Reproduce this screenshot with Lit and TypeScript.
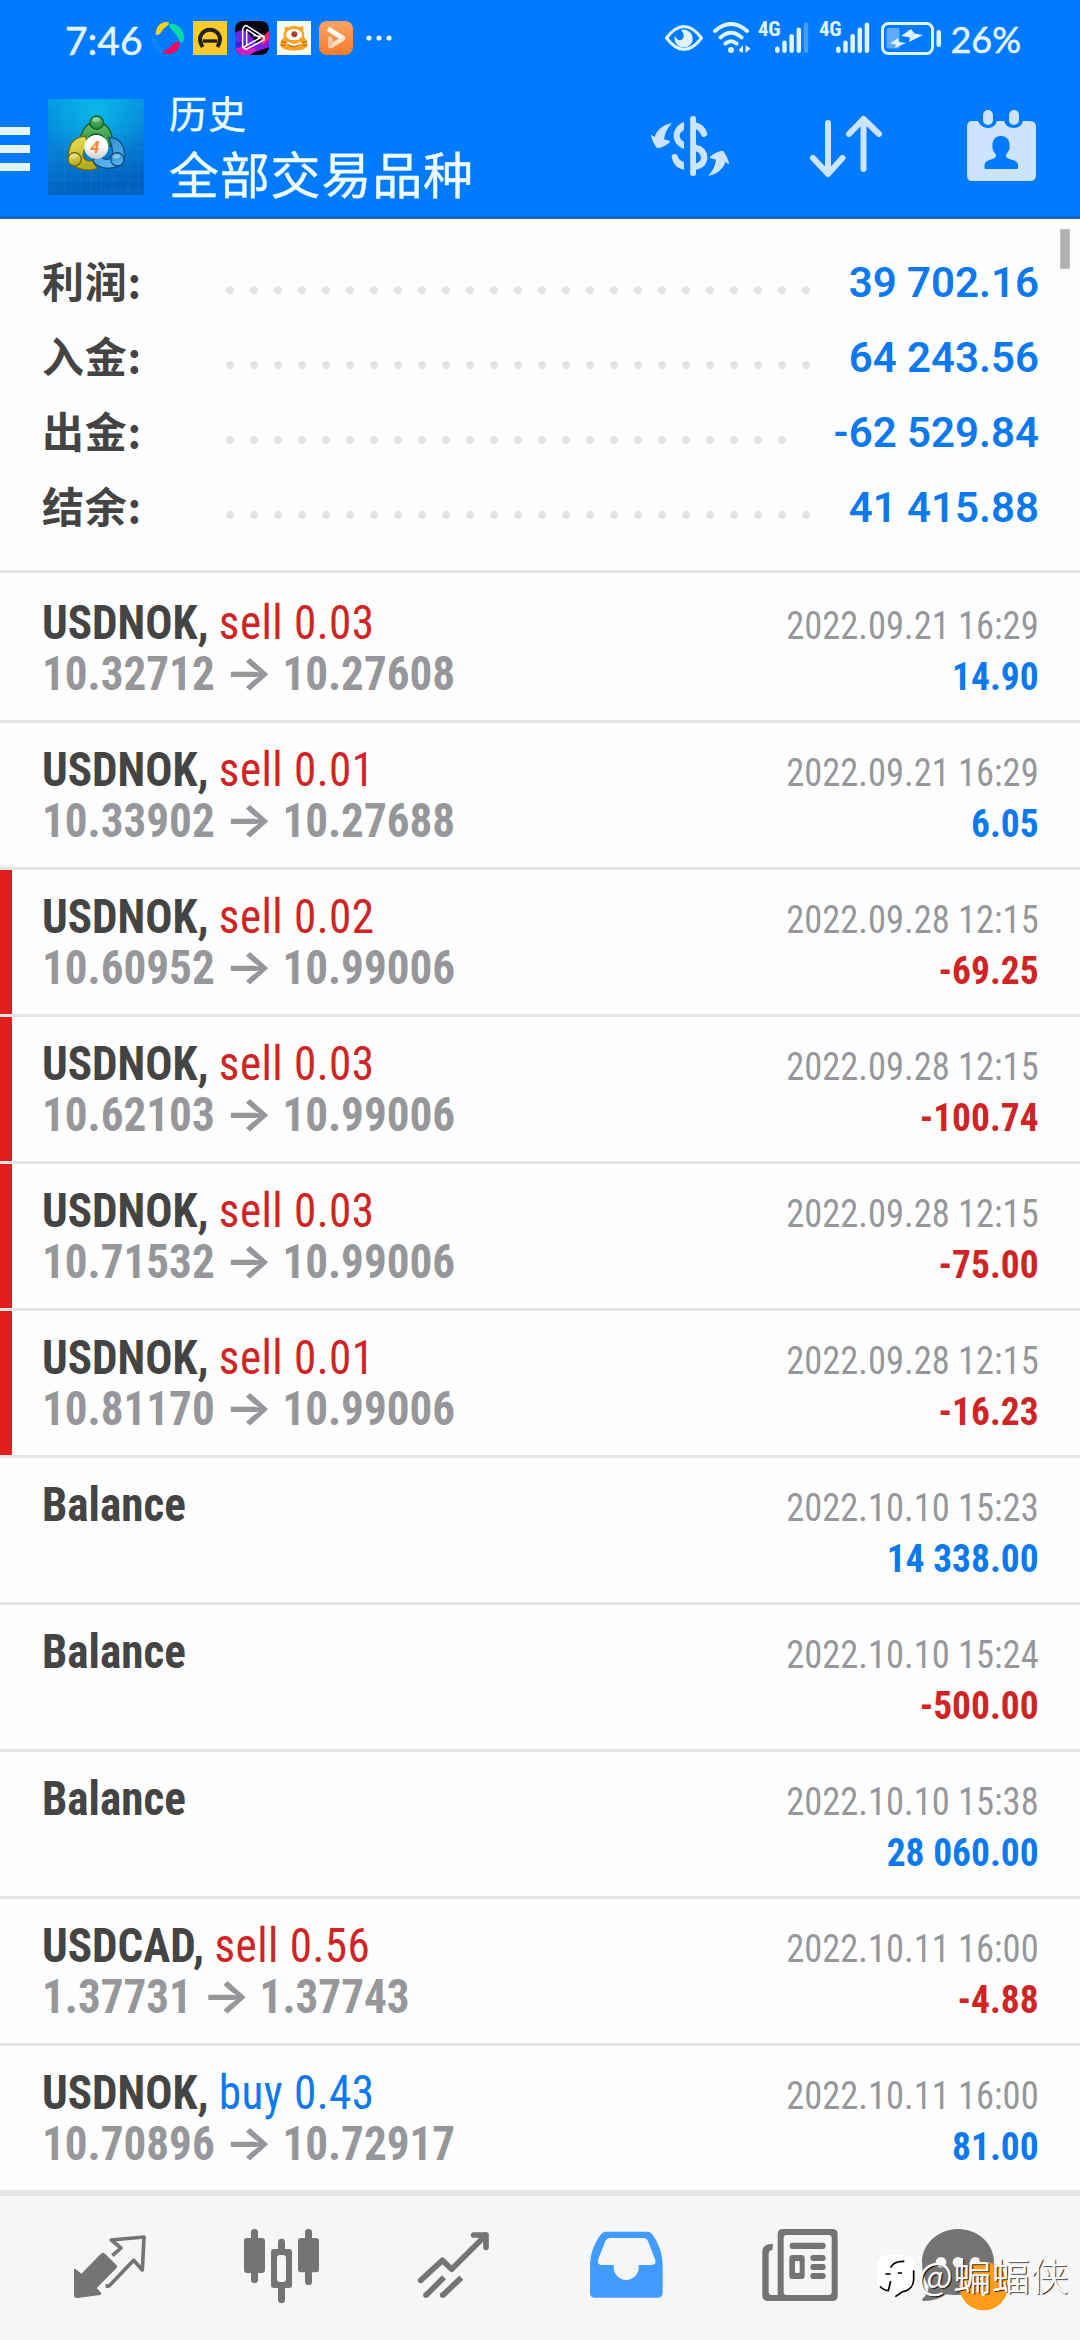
import { LitElement, html, css, svg, nothing } from "lit";
import { customElement, property } from "lit/decorators.js";
import { classMap } from "lit/directives/class-map.js";

interface Deal {
  symbol: string;
  side?: "sell" | "buy";
  volume?: string;
  open?: string;
  close?: string;
  time: string;
  profit: string;
  stopped?: boolean;
}

const SUMMARY: [string, string][] = [
  ["利润:", "39 702.16"],
  ["入金:", "64 243.56"],
  ["出金:", "-62 529.84"],
  ["结余:", "41 415.88"],
];

const DEALS: Deal[] = [
  { symbol: "USDNOK", side: "sell", volume: "0.03", open: "10.32712", close: "10.27608", time: "2022.09.21 16:29", profit: "14.90" },
  { symbol: "USDNOK", side: "sell", volume: "0.01", open: "10.33902", close: "10.27688", time: "2022.09.21 16:29", profit: "6.05" },
  { symbol: "USDNOK", side: "sell", volume: "0.02", open: "10.60952", close: "10.99006", time: "2022.09.28 12:15", profit: "-69.25", stopped: true },
  { symbol: "USDNOK", side: "sell", volume: "0.03", open: "10.62103", close: "10.99006", time: "2022.09.28 12:15", profit: "-100.74", stopped: true },
  { symbol: "USDNOK", side: "sell", volume: "0.03", open: "10.71532", close: "10.99006", time: "2022.09.28 12:15", profit: "-75.00", stopped: true },
  { symbol: "USDNOK", side: "sell", volume: "0.01", open: "10.81170", close: "10.99006", time: "2022.09.28 12:15", profit: "-16.23", stopped: true },
  { symbol: "Balance", time: "2022.10.10 15:23", profit: "14 338.00" },
  { symbol: "Balance", time: "2022.10.10 15:24", profit: "-500.00" },
  { symbol: "Balance", time: "2022.10.10 15:38", profit: "28 060.00" },
  { symbol: "USDCAD", side: "sell", volume: "0.56", open: "1.37731", close: "1.37743", time: "2022.10.11 16:00", profit: "-4.88" },
  { symbol: "USDNOK", side: "buy", volume: "0.43", open: "10.70896", close: "10.72917", time: "2022.10.11 16:00", profit: "81.00" },
];

@customElement("status-bar")
class StatusBar extends LitElement {
  static styles = css`
    :host {
      display: flex;
      align-items: center;
      box-sizing: border-box;
      height: 76px;
      padding: 0 59px 0 65px;
      color: #e4f4ff;
      font-family: Lato, "Liberation Sans", sans-serif;
    }
    svg { display: block; flex: none; }
    .time { font-size: 39px; line-height: 76px; padding-top: 3px; width: 86px; -webkit-text-stroke: 0.500px #e4f4ff; }
    .apps { display: flex; gap: 8px; }
    .more { margin-left: 13px; }
    .spacer { flex: 1; }
    .net { display: flex; align-items: flex-start; height: 34px; }
    .gen { font: 700 21px/16px "Roboto Condensed", Roboto, sans-serif; width: 17.5px; letter-spacing: -0.3px; }
    .wifi { margin: 0 7px 0 10px; }
    .second { margin-left: 9.5px; }
    .battery { margin-left: 11px; }
    .pct { font-size: 36px; line-height: 76px; padding-top: 2px; margin-left: 9px; white-space: nowrap; -webkit-text-stroke: 0.500px #e4f4ff; }
  `;

  bars(last: boolean) {
    const tops = [24.5, 18.5, 12, 5.5, 0.5];
    return svg`${tops.map(
      (t, i) => svg`<rect x=${0.1 + i * 7.15} y=${t} width="4.5" height=${31 - t} rx="2.2"
        fill="#e0f4ff" opacity=${i === 4 && !last ? 0.3 : 1}></rect>`,
    )}`;
  }

  render() {
    return html`
      <span class="time">7:46</span>
      <div class="apps">
        <svg width="34" height="34" viewBox="33 33 102 102">
          <path d="M47 72C48 48 66 32 84 37C90 40 86 46 78 50C66 56 62 76 52 74Q47 76 47 72Z" fill="#ffd21f"/>
          <path d="M88 42C116 38 136 66 131 88C129 102 122 99 116 88C110 70 94 60 88 50Z" fill="#08dca0"/>
          <path d="M119 100C120 120 100 136 78 131C66 129 66 124 76 121C90 117 98 96 114 96Q119 95 119 100Z" fill="#f8075c"/>
          <path d="M36 76C32 104 46 124 66 128C70 120 60 112 56 104C50 92 44 84 36 76Z" fill="#0a86ff"/>
        </svg>
        <svg width="34" height="34" viewBox="159 33 102 102">
          <rect x="159" y="33" width="102" height="102" fill="#ffca30"/>
          <path d="M188 112C168 82 190 60 210 60C230 60 252 82 232 112" fill="none" stroke="#222" stroke-width="12" transform="translate(0 -1)"/>
          <rect x="188" y="88" width="44" height="10" fill="#222"/>
        </svg>
        <svg width="34" height="34" viewBox="285 33 102 102">
          <defs><clipPath id="c"><rect x="285" y="33" width="102" height="102" rx="24"/></clipPath></defs>
          <g clip-path="url(#c)">
            <rect x="285" y="33" width="102" height="102" fill="#0a0512"/>
            <path d="M285 68Q305 54 322 66L350 100L387 78V112L350 124L320 135H285Z" fill="#7a22e6"/>
            <path d="M285 98L318 92L340 112L300 124Z" fill="#3e1be0"/>
            <path d="M285 116L322 104L352 120L330 135H300Z" fill="#d01fc0"/>
            <path d="M362 86L387 62V86L368 108Z" fill="#f02a62"/>
            <path d="M312 50L318 46L372 80V90L318 118L308 112V58ZM320 58V106M320 58L360 84L320 106L310 112M372 80L340 76" fill="none" stroke="#fff" stroke-width="4.5"/>
          </g>
        </svg>
        <svg width="34" height="34" viewBox="411 33 102 102">
          <rect x="411" y="33" width="102" height="102" fill="#fff"/>
          <path d="M434 50L446 52Q462 42 478 52L490 48V64Q496 74 492 82Q504 92 502 106Q498 122 462 122Q426 122 421 106Q420 92 432 82Q428 74 434 62Z" fill="#f8a422"/>
          <ellipse cx="462" cy="74" rx="24" ry="17" fill="#fff"/>
          <circle cx="463" cy="73" r="9" fill="#a8402c"/>
          <path d="M424 94L438 98M422 106L436 106M500 94L486 98M502 106L488 106" stroke="#c96a0c" stroke-width="4"/>
          <path d="M442 98Q462 112 484 98" fill="none" stroke="#fff" stroke-width="6"/>
          <path d="M444 104Q462 114 480 104" fill="none" stroke="#b4681a" stroke-width="3"/>
        </svg>
        <svg width="34" height="34" viewBox="537 33 102 102">
          <defs><linearGradient id="o" x2="0" y2="1"><stop stop-color="#ffa562"/><stop offset="1" stop-color="#f4792c"/></linearGradient></defs>
          <rect x="537" y="33" width="102" height="102" rx="24" fill="url(#o)"/>
          <path d="M570 60L608 84" stroke="#fff" stroke-width="15" stroke-linecap="round"/>
          <path d="M608 86L572 108" stroke="#ffe2cc" stroke-width="14" stroke-linecap="round"/>
          <path d="M571 86V106" stroke="#ffc49a" stroke-width="14" stroke-linecap="round"/>
        </svg>
      </div>
      <svg class="more" width="26" height="6" viewBox="0 0 26 6" fill="#e0f4ff">
        <circle cx="3" cy="3" r="2.6"/><circle cx="13" cy="3" r="2.6"/><circle cx="23" cy="3" r="2.6"/>
      </svg>
      <span class="spacer"></span>
      <svg width="38" height="26" viewBox="0 0 38 26">
        <path d="M1.5 13Q19-10 36.5 13Q19 36 1.5 13Z" fill="none" stroke="#e0f4ff" stroke-width="3"/>
        <path d="M16 5A9 9 0 1 1 10 11Q13 17 17 14.500Q21 11 16 5Z" fill="#e0f4ff"/>
      </svg>
      <svg class="wifi" width="38" height="32" viewBox="0 0 38 32" fill="none" stroke="#e0f4ff" stroke-width="4" stroke-linecap="round">
        <path d="M2 9Q18-5 34 9M7.500 15.500Q18 6 28.500 15.500M12.500 21.500Q18 17 23.500 21.500"/>
        <circle cx="18" cy="28" r="3" fill="#e0f4ff" stroke="none"/>
        <path d="M30 23V31L25.500 28.500ZM32.500 31V23L37.500 26.500Z" fill="#e0f4ff" stroke="none"/>
      </svg>
      <div class="net"><span class="gen">4G</span><svg width="34" height="33" viewBox="0 -1 34 33">${this.bars(false)}</svg></div>
      <div class="net second"><span class="gen">4G</span><svg width="34" height="33" viewBox="0 -1 34 33">${this.bars(true)}</svg></div>
      <svg class="battery" width="60" height="33" viewBox="0 0 60 33">
        <rect x="1.500" y="1.500" width="50" height="30" rx="6" fill="none" stroke="#e0f4ff" stroke-width="3"/>
        <rect x="5.500" y="6" width="13" height="20.500" rx="2" fill="#5fabff"/>
        <rect x="55.500" y="8" width="4.500" height="17" rx="2" fill="#e0f4ff"/>
        <path d="M30 7L20 14L29 15.500L28 20L42 13L33.500 11.500ZM17 16L9 21.500L15 22.500L14 26L25 21L18 20Z" fill="#e0f4ff"/>
      </svg>
      <span class="pct">26%</span>
    `;
  }
}

@customElement("title-bar")
class TitleBar extends LitElement {
  static styles = css`
    :host { display: flex; align-items: center; height: 140px; }
    svg { display: block; flex: none; }
    .menu { display: flex; flex-direction: column; gap: 10px; width: 30px; padding-top: 6px; }
    .menu i { height: 8px; background: #e4f6ff; }
    .logo { margin: 2px 25px 0 18px; }
    .four { font: italic 700 50px Roboto, sans-serif; fill: #f08a3c; }
    .titles {
      flex: 1;
      padding-bottom: 5px;
      color: #eefcff;
      font-family: "Noto Sans CJK SC", sans-serif;
      white-space: nowrap;
      -webkit-text-stroke: 0.400px #eefcff;
    }
    .t1 { font-size: 38px; line-height: 56px; letter-spacing: 1px; }
    .t2 { font-size: 50px; line-height: 64px; letter-spacing: 0.800px; }
    .actions { display: flex; align-items: center; padding: 0 44px 0 0; color: #cce4ff; }
    .sort { margin: 0 84px 0 80px; }
  `;

  render() {
    return html`
      <div class="menu"><i></i><i></i><i></i></div>
      <svg class="logo" width="96" height="96" viewBox="24 12 288 288">
        <defs>
          <linearGradient id="bg" x2="0.200" y2="1"><stop stop-color="#0598e4"/><stop offset="0.500" stop-color="#0782d6"/><stop offset="1" stop-color="#0060bc"/></linearGradient>
          <radialGradient id="glow" cx="0.500" cy="0.120" r="0.550"><stop stop-color="#08b8e8"/><stop offset="1" stop-color="#08b8e8" stop-opacity="0"/></radialGradient>
          <linearGradient id="g" x2="0" y2="1"><stop stop-color="#6cc070"/><stop offset="1" stop-color="#1f8a34"/></linearGradient>
          <linearGradient id="y" x2="0.300" y2="1"><stop stop-color="#eee25c"/><stop offset="1" stop-color="#b6ab20"/></linearGradient>
          <linearGradient id="b" x2="0.300" y2="1"><stop stop-color="#2f88cc"/><stop offset="1" stop-color="#58b4ee"/></linearGradient>
          <linearGradient id="w" x2="0" y2="1"><stop offset="0.450" stop-color="#fff"/><stop offset="1" stop-color="#cfcfcf"/></linearGradient>
        </defs>
        <rect x="24" y="12" width="288" height="288" fill="url(#bg)"/>
        <rect x="24" y="12" width="288" height="288" fill="url(#glow)"/>
        <path d="M42 12V300M74 12V300M121 12V300M153 12V300M184 12V300M216 12V300M264 12V300M295 12V300M24 33H312M24 64H312M24 112H312M24 160H312M24 192H312M24 223H312M24 255H312M24 286H312" stroke="#3bb0f0" stroke-opacity="0.220" stroke-width="2"/>
        <g stroke-width="4">
          <path d="M120 150C116 60 222 56 218 150L196 156C206 104 132 104 142 156Z" fill="url(#g)" stroke="#175c24"/>
          <path d="M138 124C84 124 78 180 92 204C112 226 148 230 172 220L156 196C136 204 116 184 142 152Z" fill="url(#y)" stroke="#6e6810"/>
          <path d="M206 128C252 124 262 180 246 204C222 228 172 224 158 196L178 180C196 204 228 196 214 150Z" fill="url(#b)" stroke="#0f4c84"/>
          <circle cx="170" cy="83" r="20" fill="url(#g)" stroke="#175c24"/>
          <circle cx="104" cy="193" r="20" fill="url(#y)" stroke="#6e6810"/>
          <circle cx="232" cy="193" r="20" fill="url(#b)" stroke="#0f4c84"/>
        </g>
        <ellipse cx="168" cy="74" rx="11" ry="7" fill="#fff" opacity="0.350"/>
        <ellipse cx="101" cy="184" rx="11" ry="7" fill="#fff" opacity="0.350"/>
        <ellipse cx="229" cy="184" rx="11" ry="7" fill="#fff" opacity="0.400"/>
        <circle cx="169" cy="156" r="36" fill="url(#w)"/>
        <text class="four" x="151" y="175">4</text>
      </svg>
      <div class="titles">
        <div class="t1">历史</div>
        <div class="t2">全部交易品种</div>
      </div>
      <div class="actions">
        <svg width="78" height="62" viewBox="322 342 227 186" preserveAspectRatio="none" fill="currentColor">
          <rect x="436" y="345" width="17" height="180" rx="8"/>
          <path d="M418 363C378 378 378 429 418 444V422C402 414 401 396 418 387Z"/>
          <path d="M382 468A9 9 0 0 1 400 468Q406 480 418 483V507Q388 500 382 468Z"/>
          <g fill="none" stroke="currentColor" stroke-width="19" stroke-linecap="round">
            <path d="M450 373Q470 378 476 398M450 440Q476 446 477 470Q476 492 450 498"/>
          </g>
          <path id="arr" d="M383 366C355 372 338 388 333 408L322 401V406C326 420 332 432 339 441H346C358 438 368 432 377 424V420L360 415C362 396 370 380 383 366Z"/>
          <use href="#arr" transform="rotate(180 435.500 445.500)"/>
        </svg>
        <svg class="sort" width="74" height="66" viewBox="0 0 74 66" fill="none" stroke="currentColor" stroke-width="6" stroke-linecap="round" stroke-linejoin="round">
          <path d="M19 10V60M4 45L19 61L33.500 45M54.500 56V6M40 21L54.500 6L70 21"/>
        </svg>
        <svg width="69" height="72" viewBox="0 0 69 72" fill="currentColor">
          <path d="M5 11H11Q14 18 21 18Q28 18 30 11H37Q39 18 46.500 18Q54 18 56 11H63Q69 11 69 17V65Q69 71 63 71H5Q0 71 0 65V17Q0 11 5 11Z"/>
          <rect x="16" y="0" width="10" height="15" rx="5"/><rect x="42" y="0" width="10" height="15" rx="5"/>
          <path d="M34 26C41 26 43 31 42.500 38C42 42 39 43 39 46C39 50 51 49 51 55V58Q51 59 49 59H19Q17.500 59 17.500 58V55C17.500 49 29 50 29 46C29 43 26 42 25.500 38C25 31 27 26 34 26Z" fill="#007aff"/>
        </svg>
      </div>
    `;
  }
}

@customElement("account-summary")
class AccountSummary extends LitElement {
  static styles = css`
    :host {
      display: block;
      box-sizing: border-box;
      height: 354px;
      padding: 22px 41px 0 42px;
      border-bottom: 3px solid #e4e4e4;
    }
    .row { display: flex; align-items: baseline; height: 75px; line-height: 75px; white-space: nowrap; }
    .label {
      width: 176px;
      color: #444;
      font-family: "Noto Sans CJK SC", sans-serif;
      font-weight: 700;
      font-size: 42px;
      letter-spacing: 0.800px;
      transform: translateY(1px);
    }
    .track { flex: 1; margin-right: 18px; }
    .dots {
      height: 8px;
      margin-bottom: 3px;
      width: round(down, 100%, 24px);
      background: radial-gradient(circle at 12px 4px, #e4e4e4 3.600px, transparent 4.200px) 0 0 / 24px 8px repeat-x;
    }
    .value { color: #0c79ee; font: 600 42px/75px Roboto, sans-serif; }
  `;

  render() {
    return html`${SUMMARY.map(
      ([label, value]) => html`
        <div class="row">
          <span class="label">${label}</span>
          <span class="track"><div class="dots"></div></span>
          <span class="value">${value}</span>
        </div>
      `,
    )}`;
  }
}

@customElement("deal-row")
class DealRow extends LitElement {
  @property({ attribute: false }) deal!: Deal;

  static styles = css`
    :host { display: block; border-bottom: 3px solid #e4e4e4; }
    .row {
      display: flex;
      justify-content: space-between;
      box-sizing: border-box;
      height: 144px;
      padding: 21px 41px 0 30px;
      border-left: 12px solid transparent;
      font-family: "Roboto Condensed", Roboto, sans-serif;
      line-height: 51px;
    }
    .stopped { border-left-color: #e01f1f; }
    .left { font-size: 48px; transform: scaleX(0.940); transform-origin: left; }
    .right { font-size: 39px; padding-top: 4px; text-align: right; }
    .title, .prices { height: 51px; white-space: pre; }
    .symbol { font-weight: 700; color: #444; }
    .side { letter-spacing: 0.500px; }
    .sell, .loss { color: #d02424; }
    .buy, .gain { color: #0c79ee; }
    .prices { display: flex; font-weight: 700; color: #96979b; }
    .arrow {
      width: 72px;
      text-align: center;
      font: 700 46px/49px Inter, sans-serif;
      transform: scaleX(1.180);
    }
    .time { color: #96979b; transform: scaleX(0.936); transform-origin: right; }
    .profit { font-weight: 700; transform: scaleX(0.960); transform-origin: right; }
  `;

  render() {
    const d = this.deal;
    const loss = d.profit.startsWith("-");
    return html`
      <div class=${classMap({ row: true, stopped: !!d.stopped })}>
        <div class="left">
          <div class="title"><span class="symbol">${d.symbol}${d.side ? ", " : ""}</span>${d.side
            ? html`<span class="side ${d.side}">${d.side} ${d.volume}</span>`
            : nothing}</div>
          ${d.open
            ? html`<div class="prices"><span>${d.open}</span><span class="arrow">→</span><span>${d.close}</span></div>`
            : nothing}
        </div>
        <div class="right">
          <div class="time">${d.time}</div>
          <div class=${classMap({ profit: true, loss, gain: !loss })}>${d.profit}</div>
        </div>
      </div>
    `;
  }
}

@customElement("tab-bar")
class TabBar extends LitElement {
  static styles = css`
    :host {
      display: flex;
      box-sizing: border-box;
      height: 147px;
      padding: 0 24px;
      border-top: 3px solid #e4e4e4;
      background: #f6f6f6;
      color: #747474;
    }
    svg { display: block; width: 172px; height: 144px; fill: currentColor; }
    .line { fill: none; stroke: currentColor; }
    .active { color: #429bff; }
    .badge { font: 400 84px Roboto, sans-serif; fill: #fff; text-anchor: middle; }
  `;

  render() {
    return html`
      <svg viewBox="72 48 516 432">
        <path d="M222 268Q223 265 227 267L244 281L303 221Q309 216 315 221L349 255Q353 260 349 265L290 324L303 338Q306 343 300 345L232 354Q222 354 222 345Z"/>
        <path class="line" stroke-width="11" stroke-linejoin="round" d="M337 227L363 204L334 180L432 171L427 270L401 241L328 317L317 319"/>
      </svg>
      <svg viewBox="588 48 516 432">
        <rect x="732" y="174" width="63" height="105" rx="9"/><rect x="753" y="147" width="21" height="162" rx="10"/>
        <rect x="894" y="174" width="63" height="103" rx="9"/><rect x="915" y="147" width="21" height="168" rx="10"/>
        <rect x="834" y="176" width="21" height="50" rx="10"/><rect x="834" y="310" width="21" height="59" rx="10"/>
        <rect x="813" y="207" width="63" height="117" rx="9"/><rect x="831" y="225" width="27" height="81" rx="9" fill="#f6f6f6"/>
      </svg>
      <svg viewBox="24 48 516 432">
        <path class="line" stroke-width="17" stroke-linecap="round" stroke-linejoin="round" d="M182 301L247 241L275 268L378 165M341 165H378V202"/>
        <path d="M350 165H378V192Z"/>
        <path class="line" stroke-width="17" d="M198 346L252 292M248 346L304 293"/>
        <circle cx="198" cy="345" r="8.500"/><circle cx="248" cy="345" r="8.500"/>
      </svg>
      <svg class="active" viewBox="540 48 516 432">
        <path fill-rule="evenodd" d="M738 155H862Q870 155 876 162C895 188 908 220 908 258V338Q908 353 893 353H705Q690 353 690 338V258C690 220 705 185 724 162Q730 155 738 155ZM752 174Q741 174 736 184L714 240Q711 254 724 255H761V262A37.500 38 0 0 0 836 262V255H876Q889 254 886 240L864 184Q860 174 848 174Z"/>
      </svg>
      <svg viewBox="-24 48 516 432">
        <path fill-rule="evenodd" d="M189 147H337Q353 147 353 163V347Q353 363 337 363H173V163Q173 147 189 147ZM200 165Q191 165 191 174V336Q191 345 200 345H326Q335 345 335 336V174Q335 165 326 165Z"/>
        <path d="M159 192H155Q127 192 127 215V345Q127 363 145 363H180V345H155Q146 345 146 336V225Q146 210 157 210Z"/>
        <rect x="209" y="188" width="108" height="19" rx="9"/><rect x="271" y="225" width="46" height="18" rx="9"/>
        <rect x="271" y="252" width="46" height="18" rx="9"/><rect x="271" y="279" width="46" height="18" rx="9"/>
        <rect x="208" y="225" width="46" height="72" rx="10"/><rect x="225" y="243" width="14" height="36" rx="3" fill="#f6f6f6"/>
      </svg>
      <svg viewBox="492 48 516 432">
        <path d="M714 147C775 147 822 192 822 246C822 302 775 345 714 345Q690 345 678 343Q655 363 610 363Q602 360 612 352Q625 338 626 320Q606 290 606 246C606 192 655 147 714 147Z"/>
        <g fill="#f6f6f6"><circle cx="663" cy="247" r="16"/><circle cx="714" cy="247" r="16"/><circle cx="766" cy="247" r="16"/></g>
        <circle cx="791" cy="318" r="73" fill="#ff9c1a"/>
        <text class="badge" x="787" y="348">1</text>
      </svg>
    `;
  }
}

@customElement("app-root")
class AppRoot extends LitElement {
  static styles = css`
    :host { display: block; position: relative; height: 2340px; overflow: hidden; background: #fefefe; }
    header { box-sizing: border-box; height: 219px; background: #007aff; border-bottom: 3px solid #1267c4; }
    .deals deal-row:first-child { padding-top: 3px; }
    .thumb {
      position: absolute;
      top: 229px;
      right: 10px;
      box-sizing: border-box;
      width: 10px;
      height: 40px;
      background: #b0b0b0;
      border: 1px solid #c0c0c0;
    }
    .mark { position: absolute; left: 876px; bottom: 39px; display: flex; align-items: center; height: 50px; }
    .mark svg { width: 41px; height: 46px; margin-right: 1px; }
    .mark span {
      color: #fff;
      font: 300 38px/46px "Noto Sans CJK SC", sans-serif;
      height: 50px;
      letter-spacing: 0.600px;
      white-space: nowrap;
      -webkit-text-stroke: 0.500px #fff;
      text-shadow: 1.200px 1.200px 0.800px #000;
    }
  `;

  render() {
    return html`
      <header>
        <status-bar></status-bar>
        <title-bar></title-bar>
      </header>
      <account-summary></account-summary>
      <div class="deals">${DEALS.map((d) => html`<deal-row .deal=${d}></deal-row>`)}</div>
      <tab-bar></tab-bar>
      <div class="thumb"></div>
      <div class="mark">
        <svg viewBox="468 238 123 138">
          <path d="M505 243H550Q582 243 582 275V318Q582 350 548 356L526 370L522 354H505Q470 350 470 318V275Q470 243 505 243Z" fill="#fff"/>
          <g fill="none" stroke="#000" stroke-width="5">
            <path d="M480 338Q490 350 505 351L512 322M512 282Q520 262 553 263M496 301H512M533 298H546M581 290V318Q580 348 546 355L526 369"/>
          </g>
        </svg>
        <span>@蝙蝠侠</span>
      </div>
    `;
  }
}
